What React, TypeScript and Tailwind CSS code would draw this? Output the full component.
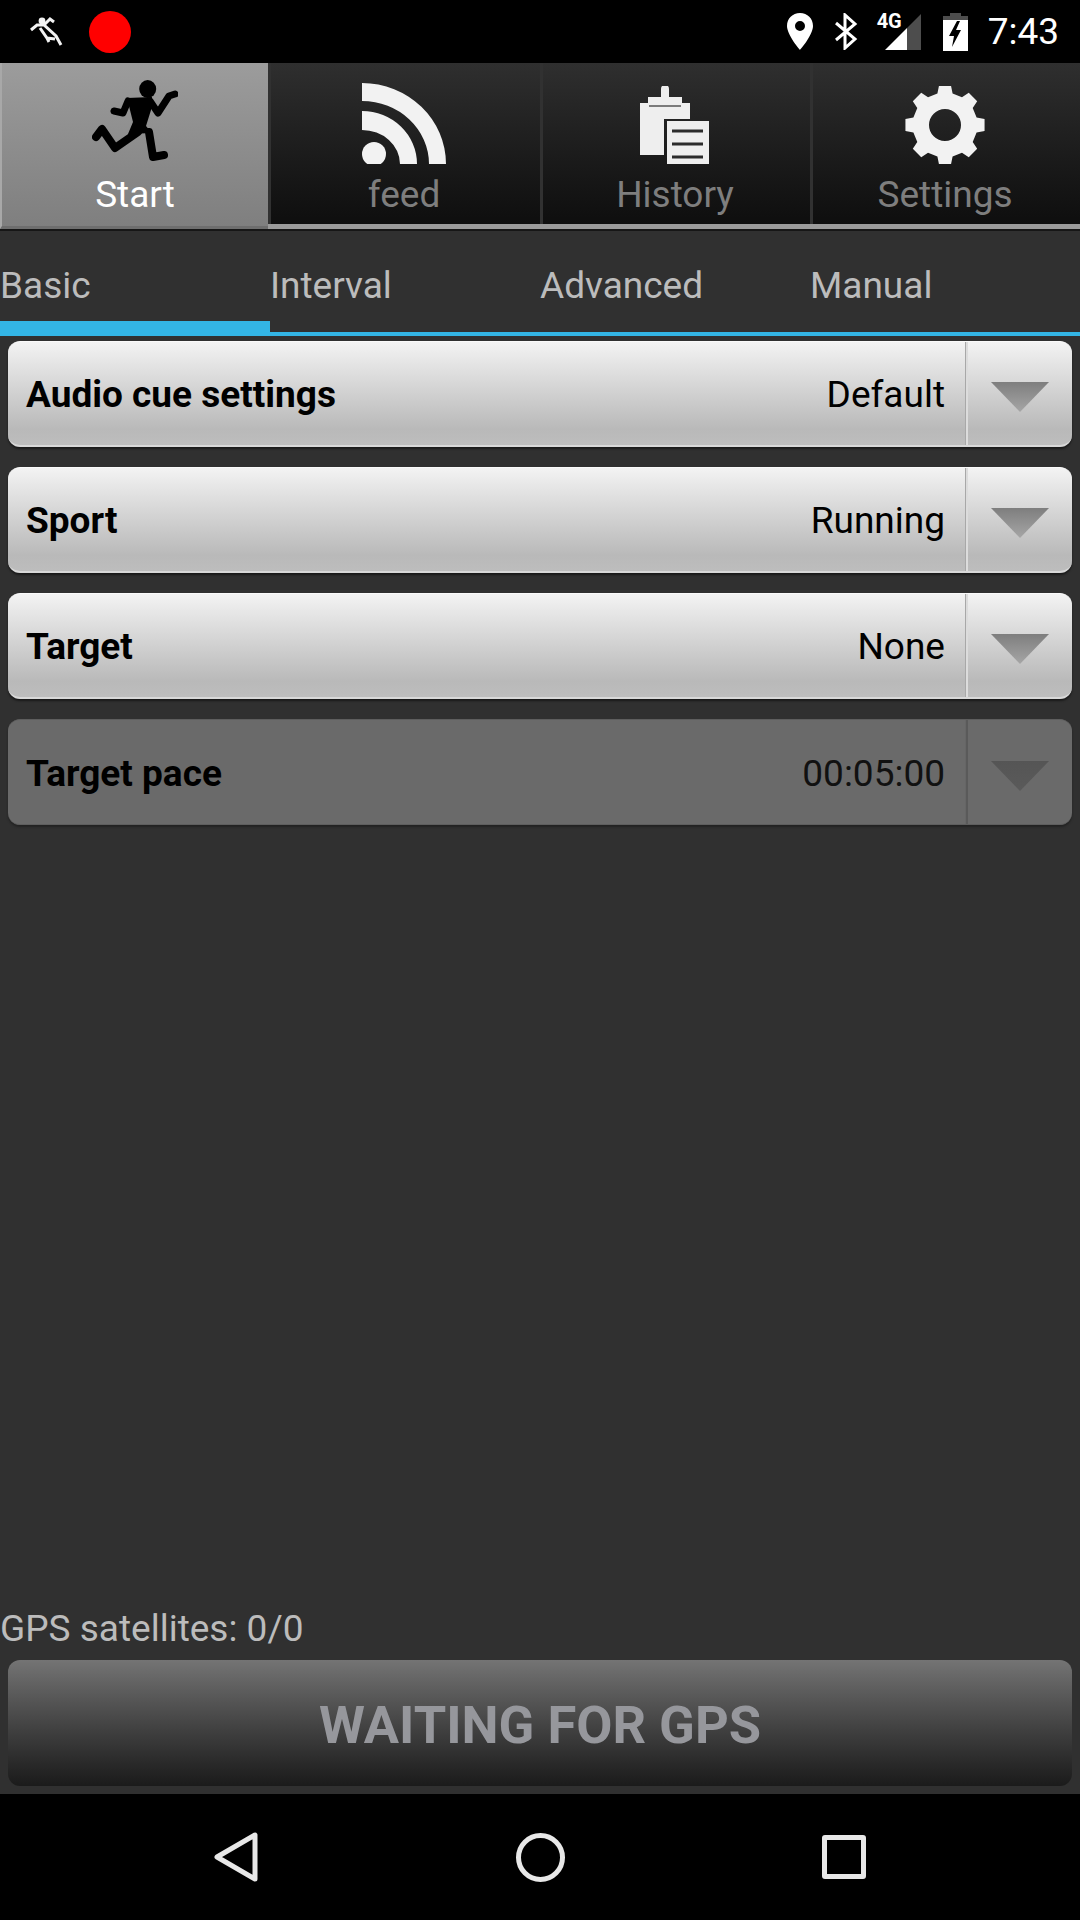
import type { ReactNode } from "react"

function gearPath() {
  const teeth = 8
  const pts: string[] = []
  for (let i = 0; i < teeth; i++) {
    const a = (i / teeth) * Math.PI * 2 - Math.PI / 2
    const step = Math.PI / teeth
    const corners = [
      [a - step * 0.6, 32.5],
      [a - step * 0.38, 40],
      [a + step * 0.38, 40],
      [a + step * 0.6, 32.5],
    ]
    for (const [ang, r] of corners) {
      pts.push(`${(40 + r * Math.cos(ang)).toFixed(2)} ${(39 + r * Math.sin(ang)).toFixed(2)}`)
    }
  }
  return `M${pts.join("L")}Z M56 39A16 16 0 1 0 24 39A16 16 0 1 0 56 39Z`
}

const RunnerTabIcon = () => (
  <svg width="86" height="84" viewBox="0 0 86 84" className="blur-[0.6px]">
    <ellipse cx="55.7" cy="9" rx="8.5" ry="9" fill="#000" />
    <path d="M35 18 L60 17 L59 30 L54 46 L60 53 L36 54 L41 42 Z" fill="#000" />
    <path
      d="M36 21 L31 33 L22 31 M58 21 L66 33 L77 16 L83 14"
      fill="none"
      stroke="#000"
      strokeWidth="7"
      strokeLinejoin="round"
      strokeLinecap="round"
    />
    <path
      d="M46 52 L23 68 L10 49 L4 57 M57 52 L61 77 L72 75"
      fill="none"
      stroke="#000"
      strokeWidth="8"
      strokeLinejoin="round"
      strokeLinecap="round"
    />
  </svg>
)

const FeedIcon = () => (
  <svg width="84" height="81" viewBox="0 0 84 81" className="blur-[0.4px]">
    <g fill="#f2f2f2">
      <path d="M0 0A84 81 0 0 1 84 81H67A67 63 0 0 0 0 18Z" />
      <path d="M0 28A55 53 0 0 1 55 81H38A38 34 0 0 0 0 47Z" />
      <circle cx="12" cy="71" r="12" />
    </g>
  </svg>
)

const HistoryIcon = () => (
  <svg width="70" height="78" viewBox="0 0 70 78" className="blur-[0.4px]">
    <path d="M0 17H8V11H21V3A4 4 0 0 1 29 3V11H42V17H50V33H24V69H0Z" fill="#eeeeee" />
    <path d="M9 20H41" stroke="#555" strokeWidth="1.5" />
    <path d="M27 35H69V78H27Z" fill="#eeeeee" />
    <path d="M32 45H63M32 58H63M32 71H63" stroke="#2b2b2b" strokeWidth="3" />
  </svg>
)

const GearIcon = () => (
  <svg width="80" height="78" viewBox="0 0 80 78" className="blur-[0.5px]">
    <path d={gearPath()} fill="#f2f2f2" fillRule="evenodd" />
  </svg>
)

function MainTab({ label, icon, active, className }: { label: string; icon: ReactNode; active?: boolean; className: string }) {
  return (
    <div
      className={`flex flex-col items-center pt-[17px] ${className} ${
        active
          ? "h-[166px] border-b-[3px] border-l-2 border-b-[#6e6e6e] border-l-[#a8a8a8] bg-gradient-to-b from-[#9c9c9c] to-[#7f7f7f]"
          : "h-[161px] border-l-[3px] border-l-[#313131] bg-gradient-to-b from-[#2f2f2f] to-[#0e0e0e] pr-[3px]"
      }`}
    >
      <div className="flex h-[84px] items-end justify-center">{icon}</div>
      <span className={`mt-[10px] text-[37px] leading-[42px] ${active ? "text-white" : "text-[#7e7e7e]"}`}>
        {label}
      </span>
    </div>
  )
}

function SubTab({ label, active }: { label: string; active?: boolean }) {
  return (
    <div className="h-full w-[270px]">
      <div className={`h-[105px] pt-[34px] text-[37px] leading-[42px] text-[#bcbcbc] ${active ? "border-b-[15px] border-[#33b5e5]" : ""}`}>
        {label}
      </div>
    </div>
  )
}

function Arrow({ id, top, bottom }: { id: string; top: string; bottom: string }) {
  return (
    <svg width="60" height="32" viewBox="0 0 60 32" className="mt-[7px] blur-[0.5px]">
      <defs>
        <linearGradient id={id} x1="0" y1="0" x2="0" y2="1">
          <stop offset="0" stopColor={top} />
          <stop offset="1" stopColor={bottom} />
        </linearGradient>
      </defs>
      <path d="M1 1H59L30 31Z" fill={`url(#${id})`} />
    </svg>
  )
}

function SpinnerRow({ label, value, disabled, id }: { label: string; value: string; disabled?: boolean; id: string }) {
  return (
    <div
      className={`flex h-[106px] items-stretch rounded-[12px] text-[37px] leading-[42px] text-black ${
        disabled
          ? "border-y border-y-[#5e5e5e] bg-[#6a6a6a] shadow-[0_2px_2px_#222222]"
          : "border-t border-b-2 border-t-[#fafafa] border-b-[#d8d8d8] bg-gradient-to-b from-[#f3f3f3] via-[#b9b9b9] via-[85%] to-[#bdbdbd] shadow-[0_2px_2px_#1a1a1a]"
      }`}
    >
      <div
        className={`flex flex-1 items-center justify-between border-r pl-[18px] pr-[20px] pt-[3px] ${
          disabled ? "border-r-[#666666]" : "border-r-[#a8a8a8]"
        }`}
      >
        <span className="font-bold">{label}</span>
        <span className={disabled ? "text-[#111111]" : ""}>{value}</span>
      </div>
      <div
        className={`flex w-[106px] items-center justify-center border-l-2 ${
          disabled ? "border-l-[#5a5a5a]" : "border-l-[#dcdcdc]"
        }`}
      >
        {disabled ? <Arrow id={id} top="#555555" bottom="#5a5a5a" /> : <Arrow id={id} top="#7e7e7e" bottom="#a6a6a6" />}
      </div>
    </div>
  )
}

export default function App() {
  return (
    <div className="flex h-[1920px] w-[1080px] flex-col overflow-hidden bg-[#303030] font-['Roboto',sans-serif]">
      {/* status bar */}
      <div className="flex h-[63px] shrink-0 items-center justify-between bg-black pl-[30px] pr-[21px]">
        <div className="flex items-center gap-[25px]">
          <svg width="34" height="32" viewBox="0 0 34 32">
            <circle cx="12" cy="5" r="3.4" fill="#f2f2f2" />
            <path
              d="M1 14L7 9L14 9L26 20L31 29M14 9L20 3L24 6M10 12L17 22L25 23M17 22L19 26"
              fill="none"
              stroke="#f2f2f2"
              strokeWidth="3"
            />
          </svg>
          <div className="h-[42px] w-[42px] rounded-full bg-[#ff0000]" />
        </div>
        <div className="flex items-center">
          <svg width="26" height="37" viewBox="0 0 26 37" className="mb-[1px]">
            <path
              d="M13 0C5.5 0 0 5.5 0 13C0 22 13 37 13 37C13 37 26 22 26 13C26 5.5 20.5 0 13 0ZM13 18A5 5 0 1 1 13 8A5 5 0 0 1 13 18Z"
              fill="#fff"
              fillRule="evenodd"
            />
          </svg>
          <svg width="24" height="37" viewBox="0 0 24 37" className="mb-[1px] ml-[21px]">
            <path d="M2 10L21 26L11 35V2L21 11L2 27" fill="none" stroke="#fff" strokeWidth="3" />
          </svg>
          <div className="relative mb-[1px] ml-[17px] h-[37px] w-[46px]">
            <span className="absolute left-[2px] top-[-2px] text-[20px] font-bold leading-[20px] text-white">4G</span>
            <svg width="36" height="36" viewBox="0 0 36 36" className="absolute bottom-0 right-0">
              <path d="M0 36L22 14V36Z" fill="#fff" />
              <path d="M22 14L36 0V36H22Z" fill="#4d4d4d" />
            </svg>
          </div>
          <svg width="25" height="38" viewBox="0 0 25 38" className="ml-[22px]">
            <path d="M7 0H18V3H7Z" fill="#4d4d4d" />
            <path d="M0 3H25V7H0Z" fill="#4d4d4d" />
            <path d="M0 7H25V38H0Z" fill="#fff" />
            <path d="M14 8L6 23H11L9 34L18 17H13L17 8Z" fill="#000" />
          </svg>
          <span className="ml-[20px] text-[37px] leading-[42px] text-white">7:43</span>
        </div>
      </div>

      {/* main tabs */}
      <div className="relative h-[166px] shrink-0">
        <div className="flex items-start">
          <MainTab label="Start" icon={<RunnerTabIcon />} active className="w-[268px]" />
          <MainTab label="feed" icon={<FeedIcon />} className="w-[272px]" />
          <MainTab label="History" icon={<HistoryIcon />} className="w-[270px]" />
          <MainTab label="Settings" icon={<GearIcon />} className="w-[270px]" />
        </div>
        <div className="absolute bottom-0 left-[268px] right-0 h-[5px] bg-[#9a9a9a]" />
      </div>
      <div className="h-[2px] shrink-0 bg-[#161616]" />

      {/* sub tabs */}
      <div className="flex h-[105px] shrink-0 border-b-[4px] border-[#33b5e5]">
        <SubTab label="Basic" active />
        <SubTab label="Interval" />
        <SubTab label="Advanced" />
        <SubTab label="Manual" />
      </div>

      {/* settings rows */}
      <div className="flex flex-col gap-[20px] px-[8px] pt-[5px]">
        <SpinnerRow id="a1" label="Audio cue settings" value="Default" />
        <SpinnerRow id="a2" label="Sport" value="Running" />
        <SpinnerRow id="a3" label="Target" value="None" />
        <SpinnerRow id="a4" label="Target pace" value="00:05:00" disabled />
      </div>

      <div className="flex-1" />

      <div className="pb-[10px] text-[37px] leading-[42px] text-[#bcbcbc]">GPS satellites: 0/0</div>
      <div className="mx-[8px] flex h-[126px] shrink-0 items-center justify-center rounded-[12px] bg-gradient-to-b from-[#747474] to-[#1b1b1b] pt-[4px] text-[52.5px] font-bold text-[#96979c]">
        WAITING FOR GPS
      </div>
      <div className="h-[8px] shrink-0" />

      {/* nav bar */}
      <div className="flex h-[126px] shrink-0 items-center justify-center bg-black">
        <svg width="44" height="50" viewBox="0 0 44 50" className="mr-[258px]">
          <path d="M41 3V47L3 25Z" fill="none" stroke="#e8e8e8" strokeWidth="5" strokeLinejoin="round" />
        </svg>
        <div className="mr-[257px] h-[49px] w-[49px] rounded-full border-[5px] border-[#e8e8e8]" />
        <div className="h-[44px] w-[44px] rounded-[3px] border-[5px] border-[#e8e8e8]" />
      </div>
    </div>
  )
}
